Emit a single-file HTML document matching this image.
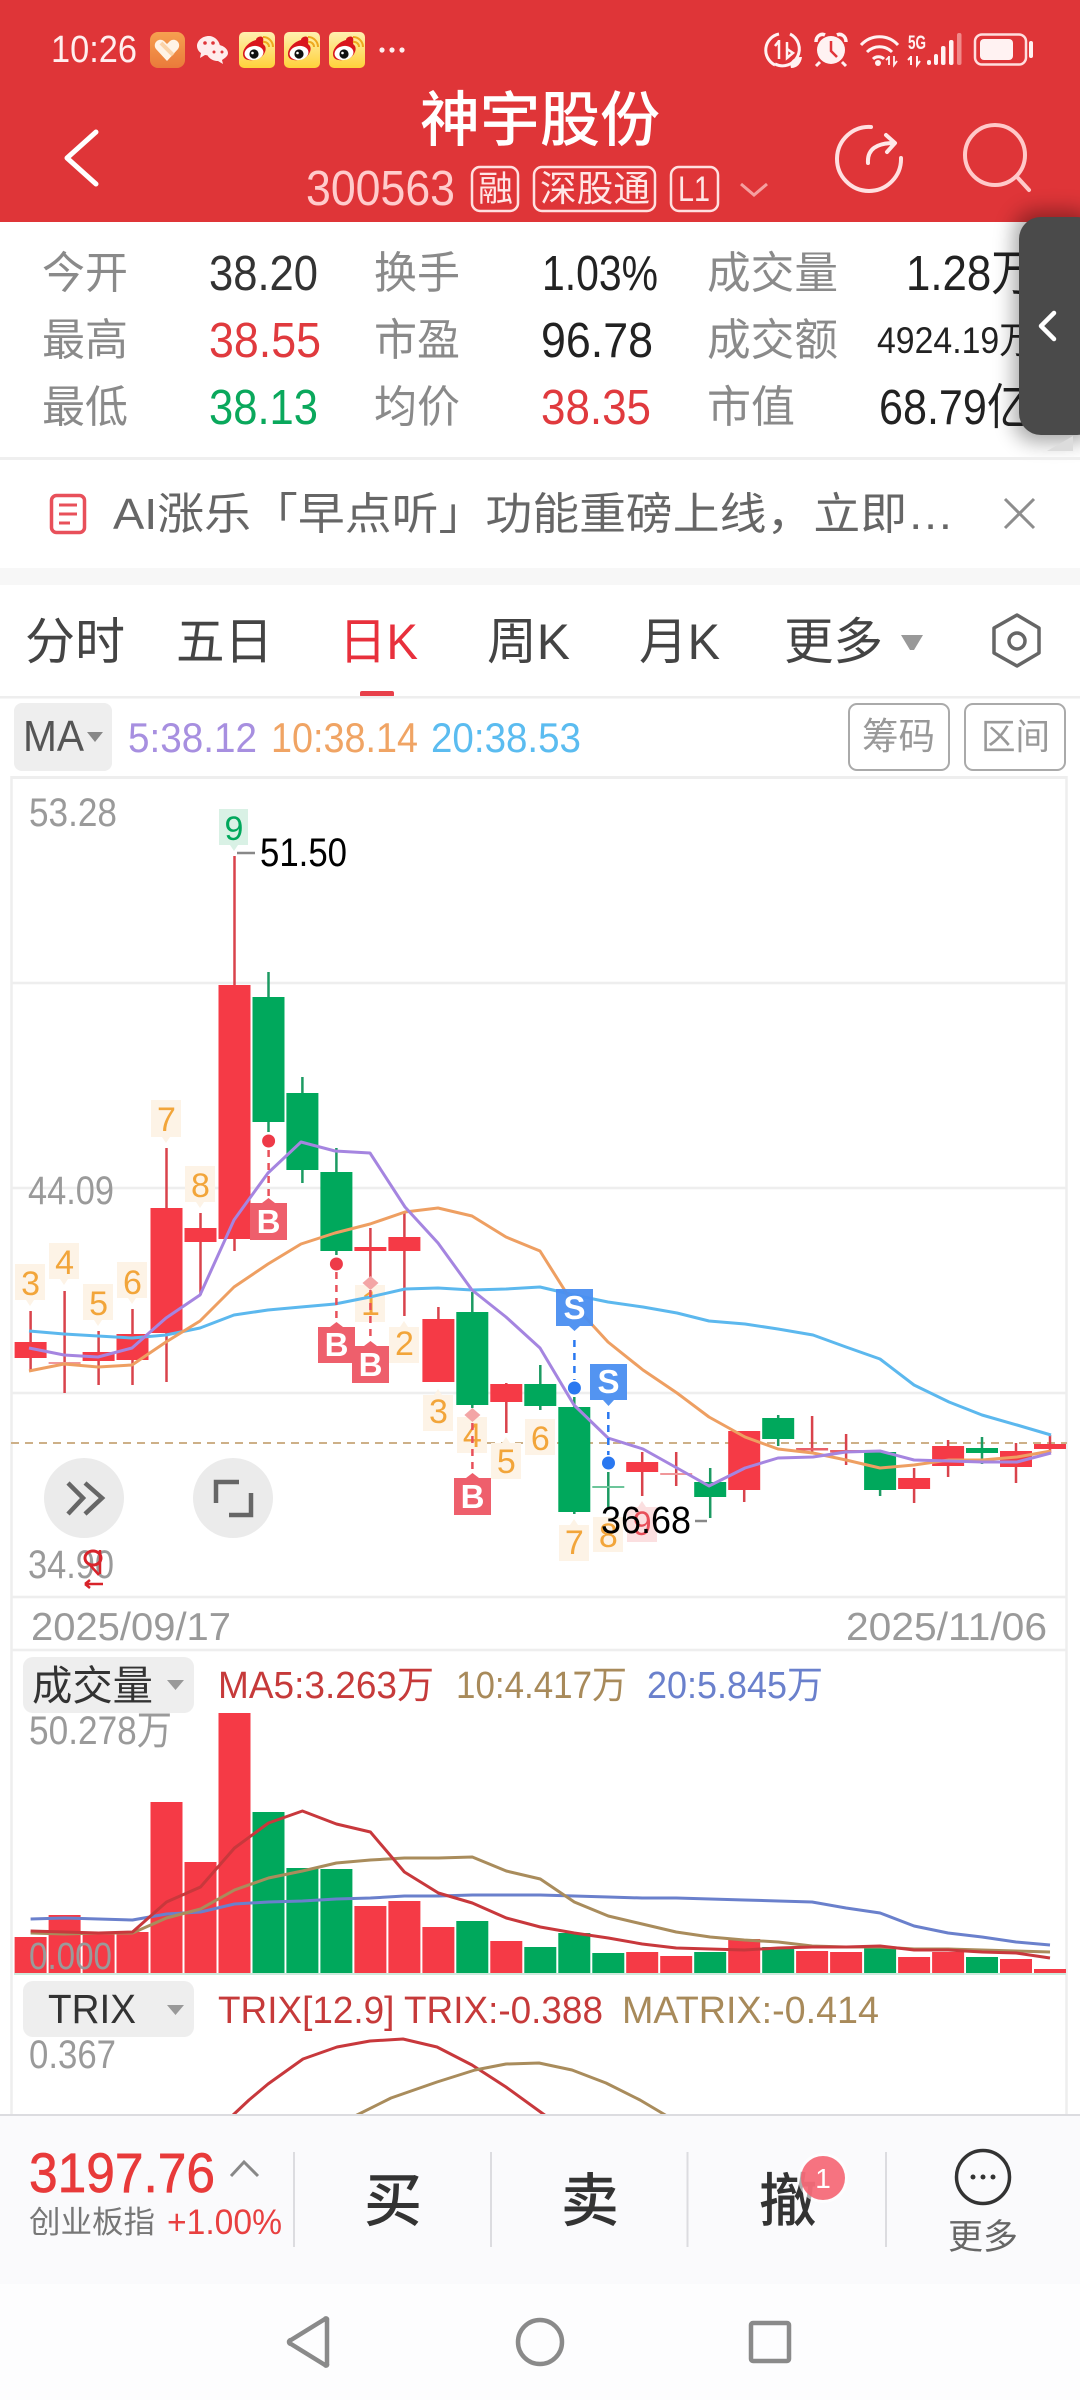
<!DOCTYPE html>
<html lang="zh"><head><meta charset="utf-8"><title>神宇股份</title>
<style>
html,body{margin:0;padding:0;background:#fff;width:1080px;height:2400px;overflow:hidden}
svg{display:block}
text{font-family:"Liberation Sans","Noto Sans CJK SC",sans-serif}
.cj{font-family:"Noto Sans CJK SC","Liberation Sans",sans-serif}
</style></head><body>
<svg xmlns="http://www.w3.org/2000/svg" width="1080" height="2400" viewBox="0 0 1080 2400">
<defs>
<filter id="b" x="-50%" y="-20%" width="200%" height="140%"><feGaussianBlur stdDeviation="10"/></filter>
<linearGradient id="yl" x1="0" y1="0" x2="0" y2="1"><stop offset="0" stop-color="#fff0b0"/><stop offset="1" stop-color="#ffd23a"/></linearGradient>
<linearGradient id="or" x1="0" y1="0" x2="0" y2="1"><stop offset="0" stop-color="#f6a050"/><stop offset="1" stop-color="#ea7a3a"/></linearGradient>
</defs>
<rect width="1080" height="2400" fill="#fff"/>
<!-- header -->
<rect width="1080" height="222" fill="#df3538"/>
<text x="51" y="62" font-size="38" fill="#ffeeee" textLength="86" lengthAdjust="spacingAndGlyphs">10:26</text>
<rect x="150" y="32" width="35" height="36" rx="8" fill="url(#or)"/>
<path d="M167 61l-11-12c-4-6 3-12 8-8l3 3 3-3c5-4 12 2 8 8z" fill="#fff3e6"/>
<path d="M161 43l12 12" stroke="#fbd3a8" stroke-width="4"/>
<path d="M209 36c-7 0-12 5-12 10 0 3 2 6 4 7l-1 5 5-3c2 0 3 1 4 0 0-5 5-9 11-9-1-6-6-10-11-10z" fill="#ffecec"/>
<path d="M218 45c-6 0-11 4-11 8s5 8 11 8l5 3-1-4c3-2 6-4 6-7 0-4-5-8-10-8z" fill="#ffecec"/>
<circle cx="205" cy="43" r="1.8" fill="#e03539"/><circle cx="213" cy="43" r="1.8" fill="#e03539"/><circle cx="214" cy="52" r="1.5" fill="#e03539"/><circle cx="222" cy="52" r="1.5" fill="#e03539"/>
<g>
<rect x="239" y="32" width="36" height="36" rx="5" fill="url(#yl)"/>
<path d="M243 54c0-7 8-13 13-14 0-3 6-5 7-2 1 3-1 5 1 7 3 2 2 9-4 13-6 3-17 4-17-4z" fill="#d9151d"/>
<ellipse cx="254" cy="53" rx="9.5" ry="7" fill="#fff" transform="rotate(-10 254 53)"/><circle cx="254" cy="54" r="4.6" fill="#111"/><circle cx="252.500" cy="53" r="1.3" fill="#fff"/>
<path d="M263 42a5 5 0 0 1 6 5M263 37a10 10 0 0 1 10 10" fill="none" stroke="#eea81e" stroke-width="2"/>
</g>
<g transform="translate(45 0)">
<rect x="239" y="32" width="36" height="36" rx="5" fill="url(#yl)"/>
<path d="M243 54c0-7 8-13 13-14 0-3 6-5 7-2 1 3-1 5 1 7 3 2 2 9-4 13-6 3-17 4-17-4z" fill="#d9151d"/>
<ellipse cx="254" cy="53" rx="9.500" ry="7" fill="#fff" transform="rotate(-10 254 53)"/><circle cx="254" cy="54" r="4.6" fill="#111"/><circle cx="252.500" cy="53" r="1.3" fill="#fff"/>
<path d="M263 42a5 5 0 0 1 6 5M263 37a10 10 0 0 1 10 10" fill="none" stroke="#eea81e" stroke-width="2"/>
</g>
<g transform="translate(90 0)">
<rect x="239" y="32" width="36" height="36" rx="5" fill="url(#yl)"/>
<path d="M243 54c0-7 8-13 13-14 0-3 6-5 7-2 1 3-1 5 1 7 3 2 2 9-4 13-6 3-17 4-17-4z" fill="#d9151d"/>
<ellipse cx="254" cy="53" rx="9.500" ry="7" fill="#fff" transform="rotate(-10 254 53)"/><circle cx="254" cy="54" r="4.6" fill="#111"/><circle cx="252.500" cy="53" r="1.3" fill="#fff"/>
<path d="M263 42a5 5 0 0 1 6 5M263 37a10 10 0 0 1 10 10" fill="none" stroke="#eea81e" stroke-width="2"/>
</g>
<circle cx="382" cy="50" r="2.600" fill="#ffeeee"/><circle cx="392" cy="50" r="2.600" fill="#ffeeee"/><circle cx="402" cy="50" r="2.600" fill="#ffeeee"/>
<!-- status right -->
<path d="M790 34a16.500 16.500 0 1 1-15 30" fill="none" stroke="#fff2f2" stroke-width="3"/>
<path d="M775 65a16.500 16.500 0 0 1 4-31" fill="none" stroke="#fff2f2" stroke-width="3"/>
<path d="M779 40v19M775 46l4-5M787 42v17M787 58l6-5-6-4z" stroke="#fff2f2" stroke-width="2.500" fill="none"/>
<path d="M791 68c-2-7 3-11 11-11-1 7-5 11-11 11z" fill="#fff2f2"/>
<circle cx="831" cy="50" r="14" fill="#fff2f2"/>
<path d="M831 41v10l6 6" stroke="#e03539" stroke-width="2.500" fill="none"/>
<path d="M816 42c0-6 5-9 9-7M846 42c0-6-5-9-9-7" stroke="#fff2f2" stroke-width="3.500" fill="none"/>
<path d="M820 62l-4 4M842 62l4 4" stroke="#fff2f2" stroke-width="3"/>
<path d="M861 45c10-11 27-11 37 0M867 52c7-7 18-7 25 0M873 59c3-3 8-3 11 0" fill="none" stroke="#fff2f2" stroke-width="3"/>
<circle cx="878" cy="63" r="3" fill="#fff2f2"/>
<path d="M889 56v9M886 60l3-3M894 56v9l3-4" stroke="#fff2f2" stroke-width="1.800" fill="none"/>
<text x="908" y="49" font-size="19" font-weight="bold" fill="#fff2f2" textLength="18" lengthAdjust="spacingAndGlyphs">5G</text>
<path d="M911 56v9M908 60l3-3M917 56v9l3-4" stroke="#fff2f2" stroke-width="2" fill="none"/>
<rect x="927" y="60" width="4" height="5" rx="2" fill="#fff2f2"/><rect x="934" y="54" width="4" height="11" rx="2" fill="#fff2f2"/><rect x="941" y="46" width="4.500" height="19" rx="2" fill="#fff2f2"/><rect x="949" y="40" width="4.500" height="25" rx="2" fill="#fff2f2"/><rect x="957" y="33" width="4.500" height="32" rx="2" fill="#f08a8a"/>
<rect x="975" y="34.500" width="51" height="30" rx="7" fill="none" stroke="#ffdede" stroke-width="2.500"/>
<rect x="980" y="39" width="33" height="21" rx="4" fill="#fff2f2"/>
<rect x="1029" y="41" width="4" height="17" rx="2" fill="#fff2f2"/>
<!-- title -->
<text x="420" y="141" font-size="60" font-weight="500" fill="#fff" textLength="240" lengthAdjust="spacingAndGlyphs">神宇股份</text>
<path d="M96 132L67 158 96 184" fill="none" stroke="#fff" stroke-width="5" stroke-linecap="round" stroke-linejoin="round"/>
<text x="306" y="205" font-size="49" fill="#ffcccc" textLength="149" lengthAdjust="spacingAndGlyphs">300563</text>
<rect x="472" y="167" width="46" height="44" rx="8" fill="none" stroke="#ffe0e0" stroke-width="2.500"/>
<text x="478" y="201" font-size="35" fill="#ffe6e6">融</text>
<rect x="534" y="167" width="121" height="44" rx="8" fill="none" stroke="#ffe0e0" stroke-width="2.500"/>
<text x="540" y="201" font-size="36" fill="#ffe6e6" textLength="110" lengthAdjust="spacingAndGlyphs">深股通</text>
<rect x="671" y="167" width="47" height="44" rx="8" fill="none" stroke="#ffe0e0" stroke-width="2.500"/>
<text x="678" y="201" font-size="35" fill="#ffe6e6" textLength="32" lengthAdjust="spacingAndGlyphs">L1</text>
<path d="M741 184l13 11 13-11" fill="none" stroke="#f5a0a0" stroke-width="3"/>
<path d="M871 127a32 32 0 1 0 30 31" fill="none" stroke="#ffe0e0" stroke-width="4" stroke-linecap="round"/>
<path d="M868 163c-1-14 9-20 26-20M886 135l9 8-8 9" fill="none" stroke="#ffe8e8" stroke-width="4" stroke-linecap="round" stroke-linejoin="round"/>
<circle cx="995" cy="155" r="30" fill="none" stroke="#ffc9c9" stroke-width="4"/>
<path d="M1018 178l11 12" stroke="#ffc9c9" stroke-width="4" stroke-linecap="round"/>
<!-- info table -->
<g class="cj" font-size="44" fill="#8a8a8a">
<text x="42" y="288" textLength="86" lengthAdjust="spacingAndGlyphs">今开</text>
<text x="42" y="355" textLength="86" lengthAdjust="spacingAndGlyphs">最高</text>
<text x="42" y="422" textLength="86" lengthAdjust="spacingAndGlyphs">最低</text>
<text x="374" y="288" textLength="86" lengthAdjust="spacingAndGlyphs">换手</text>
<text x="374" y="355" textLength="86" lengthAdjust="spacingAndGlyphs">市盈</text>
<text x="374" y="422" textLength="86" lengthAdjust="spacingAndGlyphs">均价</text>
<text x="707" y="288" textLength="131" lengthAdjust="spacingAndGlyphs">成交量</text>
<text x="707" y="355" textLength="131" lengthAdjust="spacingAndGlyphs">成交额</text>
<text x="707" y="422" textLength="88" lengthAdjust="spacingAndGlyphs">市值</text>
</g>
<g font-size="49">
<text x="209" y="290" fill="#333" textLength="109" lengthAdjust="spacingAndGlyphs">38.20</text>
<text x="209" y="357" fill="#e03a3e" textLength="112" lengthAdjust="spacingAndGlyphs">38.55</text>
<text x="209" y="424" fill="#0aa85c" textLength="109" lengthAdjust="spacingAndGlyphs">38.13</text>
<text x="542" y="290" fill="#222" textLength="116" lengthAdjust="spacingAndGlyphs">1.03%</text>
<text x="541" y="357" fill="#222" textLength="112" lengthAdjust="spacingAndGlyphs">96.78</text>
<text x="541" y="424" fill="#e03a3e" textLength="110" lengthAdjust="spacingAndGlyphs">38.35</text>
<text x="906" y="290" fill="#222" textLength="129" lengthAdjust="spacingAndGlyphs">1.28万</text>
<text x="879" y="424" fill="#222" textLength="151" lengthAdjust="spacingAndGlyphs">68.79亿</text>
</g>
<text x="877" y="353" font-size="37" fill="#222" textLength="156" lengthAdjust="spacingAndGlyphs">4924.19万</text>
<rect x="1014" y="210" width="80" height="232" rx="22" fill="#000" opacity=".35" filter="url(#b)"/>
<rect x="1019" y="217" width="80" height="218" rx="22" fill="#4a4a4a"/>
<path d="M1054 313l-13 13 13 13" fill="none" stroke="#fff" stroke-width="4.500" stroke-linejoin="round" stroke-linecap="round"/>
<path d="M1047 451l26-15v15z" fill="#dcdcdc"/>
<rect y="457" width="1080" height="3" fill="#efefef"/>
<!-- banner -->
<rect x="51.500" y="495.500" width="33" height="37" rx="5" fill="none" stroke="#e8505a" stroke-width="3.500"/>
<path d="M59 505h18M59 514h18M59 523h11" stroke="#e8505a" stroke-width="3" fill="none"/>
<text x="113" y="529" font-size="44" fill="#666" textLength="841" lengthAdjust="spacingAndGlyphs">AI涨乐「早点听」功能重磅上线，立即…</text>
<path d="M1005 499l29 29M1034 499l-29 29" stroke="#8d8d8d" stroke-width="3"/>
<rect y="568" width="1080" height="17" fill="#f7f7f7"/>
<!-- tabs -->
<g font-size="50" fill="#444">
<text x="25" y="659" textLength="100" lengthAdjust="spacingAndGlyphs">分时</text>
<text x="176" y="659" textLength="97" lengthAdjust="spacingAndGlyphs">五日</text>
<text x="339" y="659" fill="#e8303c" textLength="79" lengthAdjust="spacingAndGlyphs">日K</text>
<text x="487" y="659" textLength="83" lengthAdjust="spacingAndGlyphs">周K</text>
<text x="639" y="659" textLength="81" lengthAdjust="spacingAndGlyphs">月K</text>
<text x="784" y="659" textLength="99" lengthAdjust="spacingAndGlyphs">更多</text>
</g>
<path d="M901 635h22l-9 15h-4z" fill="#999"/>
<path d="M1017 615l22 13v25l-22 13-23-13v-25z" fill="none" stroke="#666" stroke-width="3.500" stroke-linejoin="round"/>
<circle cx="1017" cy="641" r="8" fill="none" stroke="#666" stroke-width="3.500"/>
<rect x="360" y="691" width="34" height="6" rx="2" fill="#e8404a"/>
<rect y="696" width="1080" height="2.500" fill="#eee"/>
<!-- MA row -->
<rect x="14" y="703" width="98" height="68" rx="8" fill="#eee"/>
<text x="23" y="751" font-size="44" fill="#555" textLength="61" lengthAdjust="spacingAndGlyphs">MA</text>
<path d="M87 732h16l-8 10z" fill="#888"/>
<g font-size="42">
<text x="128" y="752" fill="#a78fe0" textLength="129" lengthAdjust="spacingAndGlyphs">5:38.12</text>
<text x="271" y="752" fill="#f0a464" textLength="147" lengthAdjust="spacingAndGlyphs">10:38.14</text>
<text x="431" y="752" fill="#5bbcf0" textLength="150" lengthAdjust="spacingAndGlyphs">20:38.53</text>
</g>
<rect x="849" y="704" width="100" height="66" rx="8" fill="#fff" stroke="#aaa" stroke-width="2"/>
<rect x="965" y="704" width="100" height="66" rx="8" fill="#fff" stroke="#aaa" stroke-width="2"/>
<text x="862" y="749" font-size="37" fill="#999" textLength="73" lengthAdjust="spacingAndGlyphs">筹码</text>
<text x="981" y="749" font-size="36" fill="#999" textLength="69" lengthAdjust="spacingAndGlyphs">区间</text>
<!-- chart grid -->
<rect x="11" y="776" width="1056" height="3" fill="#eee"/>
<path d="M11.500 776V2114M1066.500 776V2114" stroke="#eee" stroke-width="2.500" fill="none"/>
<path d="M11 983H1067M11 1188H1067M11 1393H1067M11 1597H1067M11 1650H1067" stroke="#eee" stroke-width="2.500" fill="none"/>
<path d="M11 1443H1067" stroke="#cdb088" stroke-width="2" stroke-dasharray="8 6" fill="none"/>
<!-- candles -->
<path fill="none" stroke="#d9434c" stroke-width="2.500" d="M30.600 1311V1370M64.600 1291V1393M98.600 1331V1385M132.500 1309V1385M166.500 1148V1382M200.500 1213V1295M234.500 856V1251M370.400 1228V1277M404.400 1213V1316M438.400 1307V1382M506.300 1383V1433M642.200 1452V1496M676.200 1452V1486M744.200 1431V1502M812.100 1416V1453M846.100 1434V1465M914.100 1468V1503M948.100 1440V1477M1016 1443V1483M1050 1435V1453"/>
<path fill="none" stroke="#1c9a62" stroke-width="2.500" d="M268.500 972V1132M302.400 1077V1183M336.400 1148V1255M472.300 1292V1408M540.300 1365V1410M574.300 1397V1514M608.300 1472V1510M710.200 1468V1518M778.200 1415V1446M880.100 1452V1496M982 1437V1464"/>
<path fill="#f53a46" d="M14.600 1342h32v16h-32zM82.600 1352h32v9h-32zM116.500 1334h32v26h-32zM150.500 1208h32v125h-32zM184.500 1228h32v14h-32zM218.500 985h32v254h-32zM354.400 1247h32v4h-32zM388.400 1237h32v14h-32zM422.400 1319h32v63h-32zM490.300 1384h32v18h-32zM626.200 1462h32v10h-32zM728.200 1431h32v59h-32zM898.100 1478h32v11h-32zM932.100 1446h32v20h-32zM1000 1451h32v16h-32zM1034 1444h32v5h-32z"/>
<path fill="#f0979a" d="M48.600 1362h32v2h-32zM660.200 1473h32v2h-32z"/>
<path fill="#e8606a" d="M796.100 1448h32v2.500h-32zM830.100 1450h32v2.500h-32z"/>
<path fill="#6cc59a" d="M592.300 1486h32v2h-32z"/>
<path fill="#00a85c" d="M252.500 997h32v125h-32zM286.400 1093h32v77h-32zM320.400 1172h32v79h-32zM456.300 1312h32v93h-32zM524.300 1384h32v22h-32zM558.300 1407h32v105h-32zM694.200 1482h32v15h-32zM762.200 1418h32v21h-32zM864.100 1452h32v38h-32zM966 1448h32v5h-32z"/>
<!-- tags -->
<g fill="#fdf3e6">
<path d="M15 1264h30v36h-11l-4 6-4-6h-11z"/>
<path d="M49 1243h30v36h-11l-4 6-4-6h-11z"/>
<path d="M83 1284h30v36h-11l-4 6-4-6h-11z"/>
<path d="M117 1262h30v36h-11l-4 6-4-6h-11z"/>
<path d="M151 1100h30v37h-11l-4 6-4-6h-11z"/>
<path d="M185 1166h30v36h-11l-4 6-4-6h-11z"/>
<path d="M355 1285h30v37h-30z"/>
<path d="M389 1327h11l4-6 4 6h11v36h-30z"/>
<path d="M423 1395h11l4-6 4 6h11v36h-30z"/>
<path d="M457 1417h30v36h-30z"/>
<path d="M491 1443h11l4-6 4 6h11v36h-30z"/>
<path d="M525 1419h30v36h-30z"/>
<path d="M559 1525h11l4-6 4 6h11v36h-30z"/>
<path d="M593 1517h30v35h-30z"/>
</g>
<path d="M627 1507h11l4-6 4 6h11v35h-30z" fill="#fbdfe0"/>
<path d="M219 809h29v36h-10l-4 6-4-6h-11z" fill="#d9f1e5"/>
<g font-size="34" fill="#f2a53a" text-anchor="middle">
<text x="30.600" y="1295">3</text><text x="64.600" y="1274">4</text><text x="98.600" y="1315">5</text><text x="132.500" y="1294">6</text><text x="166.500" y="1131">7</text><text x="200.500" y="1197">8</text><text x="370.400" y="1315">1</text><text x="404.400" y="1355">2</text><text x="438.400" y="1423">3</text><text x="472.300" y="1447">4</text><text x="506.300" y="1473">5</text><text x="540.300" y="1450">6</text><text x="574.300" y="1554">7</text><text x="608.300" y="1547">8</text>
</g>
<text x="642.200" y="1535" font-size="34" fill="#e8505a" text-anchor="middle">9</text>
<text x="234" y="840" font-size="34" fill="#00a85c" text-anchor="middle">9</text>
<!-- MA lines -->
<polyline fill="none" stroke="#5cb8ee" stroke-width="3" stroke-linejoin="round" points="29,1331 64,1334 98,1336 132,1338 166,1335 200,1328 234,1315 268,1310 301,1307 335,1304 370,1297 405,1289 438,1288 472,1290 506,1289 540,1287 574,1295 608,1302 643,1307 677,1313 709,1321 745,1324 778,1329 813,1335 846,1347 880,1359 914,1385 949,1402 982,1415 1017,1425 1051,1435"/>
<polyline fill="none" stroke="#ee9f62" stroke-width="3" stroke-linejoin="round" points="29,1371 64,1364 98,1367 132,1365 166,1342 200,1321 234,1287 268,1264 301,1244 335,1233 370,1224 405,1212 438,1208 472,1216 506,1237 540,1251 574,1305 608,1342 643,1370 677,1393 709,1417 745,1437 778,1449 813,1453 846,1460 880,1468 914,1465 949,1460 982,1460 1017,1457 1051,1451"/>
<polyline fill="none" stroke="#a585e0" stroke-width="3" stroke-linejoin="round" points="29,1348 64,1355 98,1357 132,1348 166,1318 200,1295 234,1220 268,1173 301,1142 335,1151 370,1153 405,1207 438,1243 472,1290 506,1317 540,1348 574,1405 608,1438 643,1449 677,1468 709,1486 745,1468 778,1458 813,1457 846,1452 880,1451 914,1460 949,1461 982,1462 1017,1462 1051,1453"/>
<!-- B/S markers -->
<path d="M268.600 1150V1197M336.400 1272V1320M370.400 1290V1340M472.400 1423V1472" stroke="#e8505a" stroke-width="2.500" stroke-dasharray="7 6" fill="none"/>
<circle cx="268.600" cy="1141" r="6.500" fill="#ee3a48"/><circle cx="336.400" cy="1264" r="6.500" fill="#ee3a48"/>
<path d="M370.500 1276l8 7-8 7-8-7z" fill="#f3a5a5"/><path d="M472.400 1408l8 7-8 7-8-7z" fill="#f3a5a5"/>
<g fill="#ee5f6c">
<path d="M250 1203h12l6.500-5 6.500 5h12v37h-37z"/>
<path d="M318 1327h12l6.500-5 6.500 5h12v36h-37z"/>
<path d="M352 1346h12l6.500-5 6.500 5h12v37h-37z"/>
<path d="M454 1478h12l6.500-5 6.500 5h12v37h-37z"/>
</g>
<g font-size="33" font-weight="bold" fill="#fff" text-anchor="middle">
<text x="268.500" y="1233">B</text><text x="336.500" y="1356">B</text><text x="370.500" y="1376">B</text><text x="472.500" y="1508">B</text>
</g>
<path d="M574.400 1340V1380M608.300 1412V1455" stroke="#2a78f0" stroke-width="2.500" stroke-dasharray="7 6" fill="none"/>
<circle cx="574.400" cy="1388" r="6.500" fill="#2a78f0"/><circle cx="608.500" cy="1463" r="6.500" fill="#2a78f0"/>
<g fill="#4a8ef0" fill-opacity=".95">
<path d="M556 1289h37v37h-13l-5.500 5-5.500-5h-13z"/>
<path d="M590 1364h37v36h-13l-5.500 6-5.500-6h-13z"/>
</g>
<g font-size="33" font-weight="bold" fill="#fff" text-anchor="middle">
<text x="574.500" y="1319">S</text><text x="608.500" y="1393">S</text>
</g>
<!-- chart labels -->
<g font-size="40" fill="#9a9a9a">
<text x="29" y="826" textLength="88" lengthAdjust="spacingAndGlyphs">53.28</text>
<text x="28" y="1204" textLength="86" lengthAdjust="spacingAndGlyphs">44.09</text>
<text x="28" y="1578" textLength="86" lengthAdjust="spacingAndGlyphs">34.90</text>
</g>
<path d="M237 853h18" stroke="#888" stroke-width="2.500"/>
<text x="260" y="866" font-size="40" fill="#000" textLength="87" lengthAdjust="spacingAndGlyphs">51.50</text>
<text x="601" y="1533" font-size="38" fill="#000" textLength="90" lengthAdjust="spacingAndGlyphs">36.68</text>
<path d="M695 1521h12" stroke="#888" stroke-width="2.500"/>
<!-- float buttons -->
<circle cx="84" cy="1498" r="40" fill="#ebebeb"/>
<circle cx="233" cy="1498" r="40" fill="#ebebeb"/>
<path d="M68 1483l15 15-15 16M85 1483l17 15-17 16" fill="none" stroke="#666" stroke-width="4.500"/>
<path d="M216 1503v-21h23M229 1515h22v-22" fill="none" stroke="#666" stroke-width="4.500"/>
<!-- red small glyph -->
<ellipse cx="93" cy="1558" rx="8" ry="7" fill="none" stroke="#d8232a" stroke-width="3"/>
<path d="M90 1565l9 10M100 1550v24M85 1584h18M85 1584l5-4M85 1584l5 4" fill="none" stroke="#d8232a" stroke-width="2.500"/>
<!-- dates -->
<g font-size="39" fill="#9a9a9a">
<text x="31" y="1640" textLength="200" lengthAdjust="spacingAndGlyphs">2025/09/17</text>
<text x="846" y="1640" textLength="201" lengthAdjust="spacingAndGlyphs">2025/11/06</text>
</g>
<!-- volume -->
<path fill="#f53a46" d="M14.600 1937h32v36h-32zM48.600 1915h32v58h-32zM82.600 1933h32v40h-32zM116.500 1932h32v41h-32zM150.500 1802h32v171h-32zM184.500 1862h32v111h-32zM218.500 1713h32v260h-32zM354.400 1906h32v67h-32zM388.400 1901h32v72h-32zM422.400 1927h32v46h-32zM490.300 1941h32v32h-32zM626.200 1952h32v21h-32zM660.200 1956h32v17h-32zM728.200 1939h32v34h-32zM796.100 1951h32v22h-32zM830.100 1952h32v21h-32zM898.100 1957h32v16h-32zM932.100 1952h32v21h-32zM1000 1959h32v14h-32zM1034 1969h32v4h-32z"/>
<path fill="#00a85c" d="M252.500 1812h32v161h-32zM286.400 1868h32v105h-32zM320.400 1869h32v104h-32zM456.300 1921h32v52h-32zM524.300 1947h32v26h-32zM558.300 1933h32v40h-32zM592.300 1953h32v20h-32zM694.200 1952h32v21h-32zM762.200 1947h32v26h-32zM864.100 1948h32v25h-32zM966 1957h32v16h-32z"/>
<rect x="14" y="1973" width="1052" height="2" fill="#cfe9dc"/>
<polyline fill="none" stroke="#6a80cc" stroke-width="3" stroke-linejoin="round" points="30.600,1919 64.600,1918 98.600,1919 132.500,1920 166.500,1914 200.500,1912 234.500,1904 268.500,1902 302.400,1901 336.400,1899 370.400,1898 404.400,1896 438.400,1896 472.300,1895 506.300,1895 540.300,1895 574.300,1896 608.300,1897 642.200,1898 676.200,1898 710.200,1899 744.200,1900 778.200,1901 812.100,1902 846.100,1908 880.100,1913 914.100,1926 948.100,1933 982,1937 1016,1942 1050,1945"/>
<polyline fill="none" stroke="#a98c5c" stroke-width="3" stroke-linejoin="round" points="30.600,1933 64.600,1934 98.600,1933 132.500,1933 166.500,1918 200.500,1909 234.500,1890 268.500,1878 302.400,1871 336.400,1863 370.400,1860 404.400,1858 438.400,1858 472.300,1857 506.300,1871 540.300,1879 574.300,1902 608.300,1916 642.200,1924 676.200,1932 710.200,1937 744.200,1940 778.200,1942 812.100,1946 846.100,1947 880.100,1947 914.100,1949 948.100,1949 982,1950 1016,1951 1050,1952"/>
<polyline fill="none" stroke="#c8383c" stroke-width="3" stroke-linejoin="round" points="30.600,1931 64.600,1932 98.600,1933 132.500,1932 166.500,1902 200.500,1887 234.500,1848 268.500,1823 302.400,1811 336.400,1824 370.400,1832 404.400,1872 438.400,1893 472.300,1903 506.300,1918 540.300,1927 574.300,1933 608.300,1938 642.200,1944 676.200,1948 710.200,1949 744.200,1950 778.200,1948 812.100,1947 846.100,1947 880.100,1946 914.100,1950 948.100,1950 982,1952 1016,1953 1050,1958"/>
<rect x="23" y="1657" width="171" height="56" rx="10" fill="#eee"/>
<text x="32" y="1700" font-size="41" fill="#333" textLength="121" lengthAdjust="spacingAndGlyphs">成交量</text>
<path d="M167 1680h17l-8.500 10z" fill="#999"/>
<g font-size="38">
<text x="218" y="1698" fill="#c63a3a" textLength="216" lengthAdjust="spacingAndGlyphs">MA5:3.263万</text>
<text x="456" y="1698" fill="#a88a5a" textLength="171" lengthAdjust="spacingAndGlyphs">10:4.417万</text>
<text x="647" y="1698" fill="#6a80cc" textLength="176" lengthAdjust="spacingAndGlyphs">20:5.845万</text>
</g>
<text x="29" y="1744" font-size="40" fill="#9a9a9a" textLength="143" lengthAdjust="spacingAndGlyphs">50.278万</text>
<text x="29" y="1969" font-size="38" fill="#9a9a9a" textLength="83" lengthAdjust="spacingAndGlyphs">0.000</text>
<!-- TRIX -->
<rect x="23" y="1981" width="171" height="56" rx="10" fill="#eee"/>
<text x="48" y="2023" font-size="41" fill="#333" textLength="88" lengthAdjust="spacingAndGlyphs">TRIX</text>
<path d="M167 2005h17l-8.500 10z" fill="#999"/>
<g font-size="38">
<text x="218" y="2023" fill="#c63a3a" textLength="385" lengthAdjust="spacingAndGlyphs">TRIX[12.9] TRIX:-0.388</text>
<text x="622" y="2023" fill="#a88a5a" textLength="257" lengthAdjust="spacingAndGlyphs">MATRIX:-0.414</text>
</g>
<text x="29" y="2068" font-size="40" fill="#9a9a9a" textLength="87" lengthAdjust="spacingAndGlyphs">0.367</text>
<polyline fill="none" stroke="#c8383c" stroke-width="3" stroke-linejoin="round" points="232,2116 249,2100 268,2084 303,2059 337,2047 370,2041 403,2039 437,2047 472,2065 506,2087 546,2116"/>
<polyline fill="none" stroke="#a98c5c" stroke-width="3" stroke-linejoin="round" points="355,2116 391,2098 437,2082 475,2070 506,2064 539,2063 572,2070 606,2083 640,2100 667,2116"/>
<!-- bottom bar -->
<rect y="2114" width="1080" height="170" fill="#fafafc"/>
<rect y="2114" width="1080" height="2" fill="#dcdce0"/>
<rect y="2284" width="1080" height="116" fill="#fdfdfe"/>
<text x="29" y="2192" font-size="56" fill="#e83a3a" stroke="#e83a3a" stroke-width=".7" textLength="186" lengthAdjust="spacingAndGlyphs">3197.76</text>
<path d="M231 2176l13-14 14 14" fill="none" stroke="#888" stroke-width="3"/>
<text x="29" y="2233" font-size="31" fill="#777" textLength="126" lengthAdjust="spacingAndGlyphs">创业板指</text>
<text x="167" y="2234" font-size="35" fill="#e84040" textLength="115" lengthAdjust="spacingAndGlyphs">+1.00%</text>
<path d="M294 2152v95M491 2152v95M687.500 2152v95M886 2152v95" stroke="#dcdce0" stroke-width="2"/>
<g font-size="58" font-weight="500" fill="#333" text-anchor="middle">
<text x="393" y="2221">买</text><text x="590" y="2221">卖</text><text x="788" y="2221">撤</text>
</g>
<circle cx="823" cy="2178" r="25" fill="#fff" fill-opacity=".6"/>
<circle cx="823" cy="2178" r="22" fill="#f5606e" fill-opacity=".88"/>
<text x="823" y="2188" font-size="28" fill="#fff" text-anchor="middle">1</text>
<circle cx="983" cy="2177" r="26.500" fill="none" stroke="#333" stroke-width="3.500"/>
<circle cx="973" cy="2177" r="2.500" fill="#333"/><circle cx="983" cy="2177" r="2.500" fill="#333"/><circle cx="993" cy="2177" r="2.500" fill="#333"/>
<text x="948" y="2249" font-size="35" fill="#666" textLength="70" lengthAdjust="spacingAndGlyphs">更多</text>
<!-- nav -->
<path d="M327 2320v44a1 1 0 0 1-2 1l-34-21a2 2 0 0 1 0-4l34-21a1 1 0 0 1 2 1z" fill="none" stroke="#8a8a8a" stroke-width="4.500" stroke-linejoin="round"/>
<circle cx="540" cy="2342" r="22" fill="none" stroke="#8a8a8a" stroke-width="4.500"/>
<rect x="751" y="2323" width="38" height="38" rx="2" fill="none" stroke="#8a8a8a" stroke-width="4.500"/>
</svg>
</body></html>
